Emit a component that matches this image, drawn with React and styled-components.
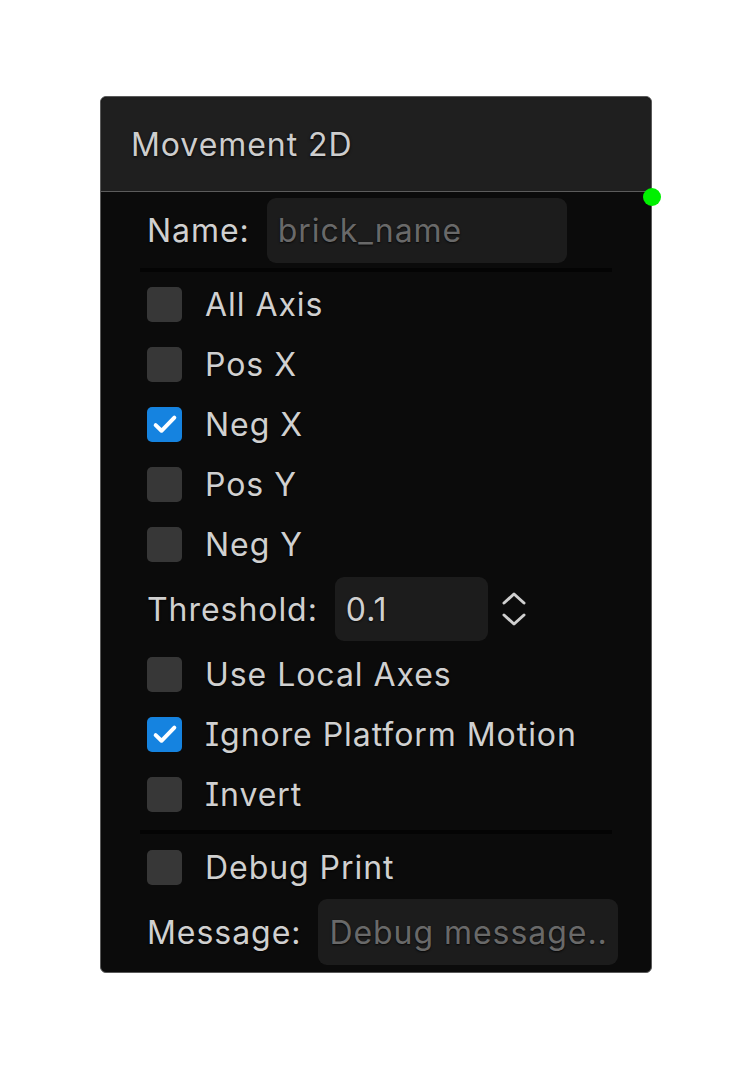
import React from 'react'
import styled, { createGlobalStyle } from 'styled-components'

/******************************************************************************/
// Data
/******************************************************************************/

const AXES = [
  { label: 'All Axis', checked: false },
  { label: 'Pos X', checked: false },
  { label: 'Neg X', checked: true },
  { label: 'Pos Y', checked: false },
  { label: 'Neg Y', checked: false }
]

const OPTIONS = [
  { label: 'Use Local Axes', checked: false },
  { label: 'Ignore Platform Motion', checked: true },
  { label: 'Invert', checked: false }
]

/******************************************************************************/
// Styles
/******************************************************************************/

const Global = createGlobalStyle`
  body {
    margin: 0;
    background: #ffffff;
    font-family: Inter, "Noto Sans", sans-serif;
    font-feature-settings: "cv08" 1;
    letter-spacing: 0.95px;
  }
`

const Page = styled.div`
  padding: 96px 0 0 100px;
`

const Card = styled.div`
  position: relative;
  width: 550px;
  background: #0b0b0b;
  border: 1px solid #5a5a5a;
  border-radius: 6px;
`

const Header = styled.div`
  height: 94px;
  padding-left: 30px;
  display: flex;
  align-items: center;
  background: #1f1f1f;
  border-bottom: 1px solid #5c5c5c;
  border-radius: 6px 6px 0 0;
  color: #cdcdcd;
  font-size: 32px;
  text-shadow: 0 1px 3px rgba(0, 0, 0, 0.9);
`

const Port = styled.span`
  position: absolute;
  top: 91px;
  right: -10px;
  width: 18px;
  height: 18px;
  border-radius: 50%;
  background: #00f000;
`

const Body = styled.div`
  padding: 6px 39px 5px;
`

const Row = styled.div`
  display: flex;
  align-items: center;
  gap: ${p => p.gap || 23}px;
  height: ${p => p.height || 60}px;
  padding-left: 7px;
  color: #d0d0d0;
  font-size: 32px;
  text-shadow: 0 1px 2px rgba(0, 0, 0, 0.8);
  white-space: nowrap;
`

const Divider = styled.div`
  height: 4px;
  margin: ${p => p.margin || '5px 0 2px'};
  background: #040404;
`

const Box = styled.span`
  flex: none;
  width: 35px;
  height: 35px;
  border-radius: 5px;
  display: flex;
  align-items: center;
  justify-content: center;
  background: ${p => p.checked ? '#1583e0' : '#373737'};
`

const Field = styled.div`
  flex: none;
  width: ${p => p.width}px;
  height: ${p => p.height || 65}px;
  padding-left: 11px;
  box-sizing: border-box;
  display: flex;
  align-items: center;
  background: #1c1c1c;
  border-radius: 9px;
  color: ${p => p.placeholder ? '#696969' : '#d0d0d0'};
  overflow: hidden;
`

const Spinner = styled.div`
  display: flex;
  flex-direction: column;
  gap: 6px;
  margin-left: -4px;
`

/******************************************************************************/
// Components
/******************************************************************************/

const Check = () =>
  <svg width='28' height='28' viewBox='0 0 24 24' fill='none'>
    <path d='M4 13l5 4.8L20 6.5' stroke='#fff' strokeWidth='3.4'
      strokeLinecap='round' strokeLinejoin='round'/>
  </svg>

const Chevron = ({ up }) =>
  <svg width='26' height='16' viewBox='0 0 26 16' fill='none'>
    <path d={up ? 'M3 13l10-9 10 9' : 'M3 3l10 9 10-9'} stroke='#cfcfcf'
      strokeWidth='3' strokeLinecap='round' strokeLinejoin='round'/>
  </svg>

const CheckRow = ({ label, checked }) =>
  <Row>
    <Box checked={checked}>{checked && <Check/>}</Box>
    {label}
  </Row>

/******************************************************************************/
// Main Component
/******************************************************************************/

const App = () => <>
  <Global/>
  <Page>
    <Card>
      <Header>Movement 2D</Header>
      <Port/>
      <Body>

        <Row gap={17} height={65}>
          Name:
          <Field width={300} placeholder>brick_name</Field>
        </Row>

        <Divider/>

        {AXES.map(a => <CheckRow key={a.label} {...a}/>)}

        <Row gap={17} height={70}>
          Threshold:
          <Field width={153} height={64}>0.1</Field>
          <Spinner><Chevron up/><Chevron/></Spinner>
        </Row>

        {OPTIONS.map(o => <CheckRow key={o.label} {...o}/>)}

        <Divider margin='6px 0 3px'/>

        <CheckRow label='Debug Print'/>

        <Row gap={17} height={70}>
          Message:
          <Field width={300} height={66} placeholder>Debug message..</Field>
        </Row>

      </Body>
    </Card>
  </Page>
</>

export default App
